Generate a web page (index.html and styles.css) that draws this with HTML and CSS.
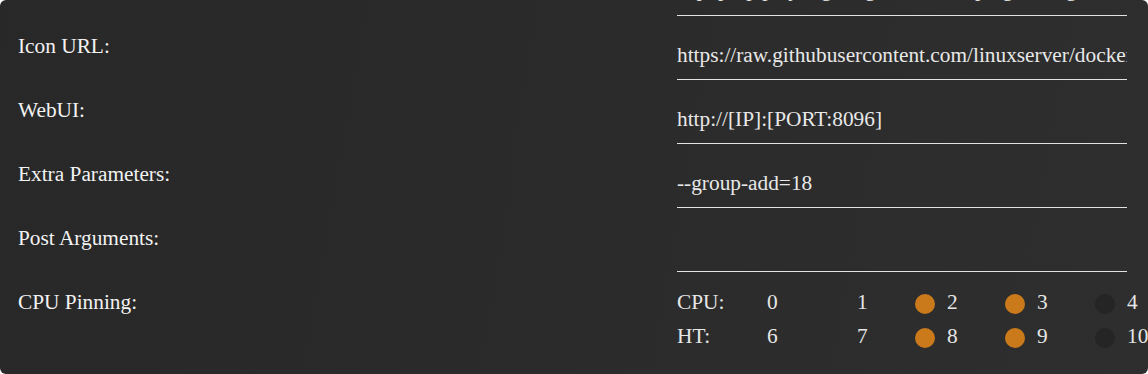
FILE: index.html
```html
<!DOCTYPE html>
<html>
<head>
<meta charset="utf-8">
<link rel="stylesheet" href="styles.css">
</head>
<body>
<div class="card">
  <div class="row partial">
    <div class="label"></div>
    <div class="field"><div class="input">A pop-up player giving the best of plugins, organizing and playing media</div></div>
  </div>
  <div class="row">
    <div class="label">Icon URL:</div>
    <div class="field"><div class="input">https://raw.githubusercontent.com/linuxserver/docker-templates/master/linuxserver.io/img/emby-logo.png</div></div>
  </div>
  <div class="row">
    <div class="label">WebUI:</div>
    <div class="field"><div class="input">http://[IP]:[PORT:8096]</div></div>
  </div>
  <div class="row">
    <div class="label">Extra Parameters:</div>
    <div class="field"><div class="input">--group-add=18</div></div>
  </div>
  <div class="row">
    <div class="label">Post Arguments:</div>
    <div class="field"><div class="input"></div></div>
  </div>
  <div class="row">
    <div class="label">CPU Pinning:</div>
    <div class="field pins">
      <div class="pinline">
        <span class="pinlabel">CPU:</span>
        <span class="cell"><span class="dot none"></span><span class="num">0</span></span>
        <span class="cell"><span class="dot none"></span><span class="num">1</span></span>
        <span class="cell"><span class="dot on"></span><span class="num">2</span></span>
        <span class="cell"><span class="dot on"></span><span class="num">3</span></span>
        <span class="cell"><span class="dot off"></span><span class="num">4</span></span>
      </div>
      <div class="pinline">
        <span class="pinlabel">HT:</span>
        <span class="cell"><span class="dot none"></span><span class="num">6</span></span>
        <span class="cell"><span class="dot none"></span><span class="num">7</span></span>
        <span class="cell"><span class="dot on"></span><span class="num">8</span></span>
        <span class="cell"><span class="dot on"></span><span class="num">9</span></span>
        <span class="cell"><span class="dot off"></span><span class="num">10</span></span>
      </div>
    </div>
  </div>
</div>
</body>
</html>
```
FILE: styles.css
```css
html, body {
  margin: 0;
  padding: 0;
  background: #ffffff;
}
.card {
  width: 1148px;
  height: 374px;
  box-sizing: border-box;
  border-radius: 6px;
  overflow: hidden;
  background: linear-gradient(100deg, #282828 0%, #2b2b2b 50%, #2e2e2e 100%);
  padding-left: 18px;
  font-family: "Liberation Serif", "Times New Roman", serif;
  font-size: 21.33px;
  line-height: 24px;
  color: #f0f0f0;
}
.row {
  display: grid;
  grid-template-columns: 659px 450px;
  grid-template-rows: 64px;
  height: 64px;
}
.row.partial {
  grid-template-rows: 16px;
  height: 16px;
  overflow: hidden;
}
.partial .field {
  display: flex;
  flex-direction: column;
  justify-content: flex-end;
  height: 16px;
}
.partial .input {
  flex: none;
  padding-top: 25px;
}
.label {
  padding-top: 18px;
  white-space: nowrap;
  color: #f2f2f2;
}
.field {
  min-width: 0;
}
.input {
  box-sizing: border-box;
  height: 64px;
  padding-top: 27px;
  border-bottom: 1px solid #e2e2e2;
  white-space: nowrap;
  overflow: hidden;
  color: #e8e8e8;
}
.pins {
  padding-top: 18px;
  color: #e6e6e6;
}
.pinline {
  display: flex;
  height: 34px;
  white-space: nowrap;
}
.pinlabel {
  width: 58px;
  flex: none;
}
.cell {
  width: 90px;
  flex: none;
  display: flex;
  gap: 12px;
  align-items: flex-start;
}
.dot {
  width: 20px;
  height: 20px;
  border-radius: 50%;
  flex: none;
  margin-top: 4px;
}
.dot.on {
  background: #cb7a1b;
}
.dot.off {
  background: #252525;
}
.dot.none {
  background: transparent;
}
```
